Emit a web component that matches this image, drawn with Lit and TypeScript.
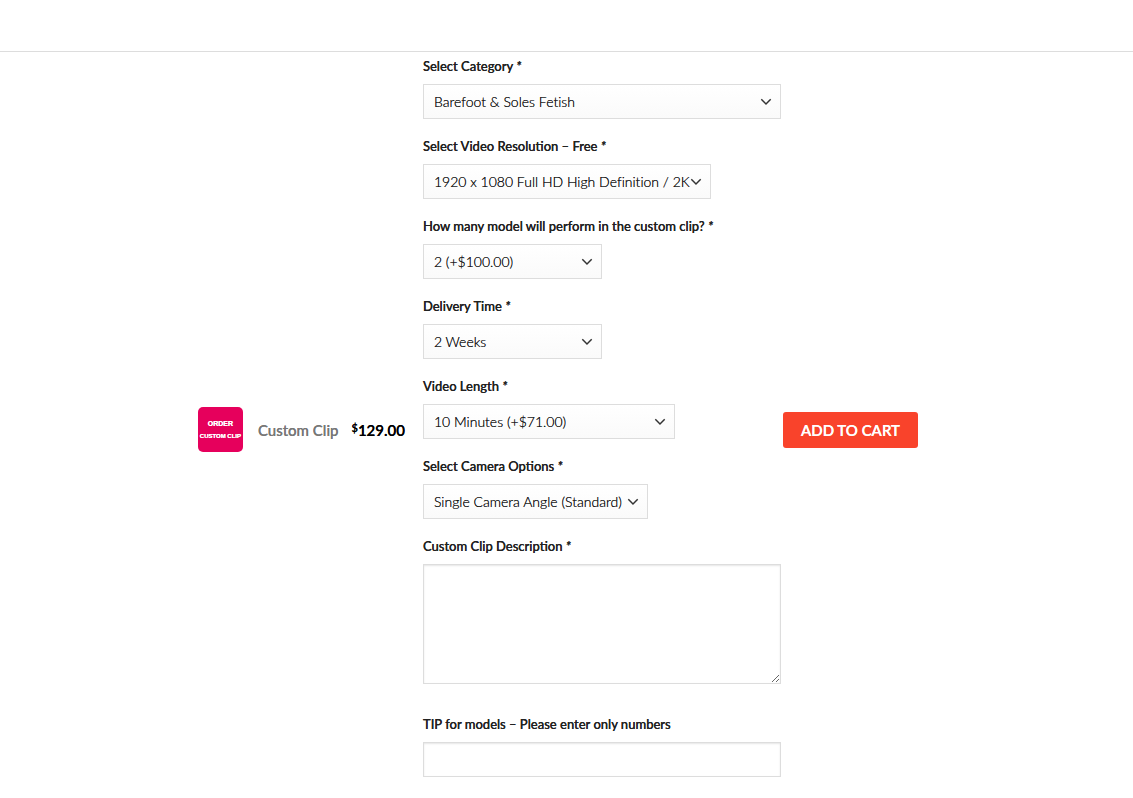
import { LitElement, html, css } from "lit";
import { customElement } from "lit/decorators.js";

interface Choice {
  id: string;
  label: string;
  value: string;
  size: string;
}

const choices: Choice[] = [
  { id: "category", label: "Select Category", value: "Barefoot & Soles Fetish", size: "full" },
  { id: "resolution", label: "Select Video Resolution – Free", value: "1920 x 1080 Full HD High Definition / 2K", size: "large" },
  { id: "models", label: "How many model will perform in the custom clip?", value: "2 (+$100.00)", size: "small" },
  { id: "delivery", label: "Delivery Time", value: "2 Weeks", size: "small" },
  { id: "length", label: "Video Length", value: "10 Minutes (+$71.00)", size: "medium" },
  { id: "camera", label: "Select Camera Options", value: "Single Camera Angle (Standard)", size: "compact" },
];

@customElement("app-root")
export class AppRoot extends LitElement {
  static styles = css`
    :host {
      display: block;
      font-family: Lato, sans-serif;
      color: #222;
      background: #fff;
    }
    * {
      box-sizing: border-box;
    }
    .top {
      height: 52px;
      border-bottom: 1px solid #ddd;
    }
    .cart {
      display: flex;
      justify-content: center;
      align-items: center;
      padding: 4px 17px 0 0;
    }
    .product {
      display: flex;
      align-items: center;
      padding-top: 26px;
      white-space: nowrap;
      font-size: 15px;
      line-height: 24px;
      font-weight: 500;
      text-shadow: 0 0 0 currentColor;
    }
    .thumb {
      width: 45px;
      height: 45px;
      margin-right: 15px;
      border-radius: 5px;
      overflow: hidden;
      background: #e6005c;
      color: #fff;
      display: flex;
      flex-direction: column;
      align-items: center;
      justify-content: center;
      font: 700 6px/13px "Liberation Sans Narrow", "Liberation Sans", sans-serif;
    }
    .thumb-top {
      font-size: 7px;
    }
    .title {
      color: #777;
      margin-right: 13px;
    }
    .price {
      color: #000;
      margin-right: 18px;
      display: flex;
      font-weight: 600;
    }
    .currency {
      font-size: 11px;
      line-height: 20px;
    }
    .form {
      flex: 0 1 358px;
      display: flex;
      flex-direction: column;
      gap: 17px;
    }
    .field {
      display: flex;
      flex-direction: column;
      align-items: flex-start;
      gap: 8px;
    }
    .label {
      font-size: 13px;
      line-height: 20px;
      font-weight: 500;
      text-shadow: 0 0 0 currentColor;
    }
    .required {
      font-style: italic;
      font-weight: 700;
      text-decoration: none;
    }
    .control {
      display: block;
      width: 100%;
      max-width: 100%;
      height: 35px;
      margin: 0;
      padding: 0 11px;
      border: 1px solid #ddd;
      border-radius: 0;
      background-color: #fff;
      color: #333;
      font: 400 14px/20px Lato, sans-serif;
      box-shadow: inset 0 1px 2px rgba(0, 0, 0, 0.1);
    }
    .select {
      appearance: none;
      padding: 0 8px 0 10px;
      box-shadow: none;
      font-weight: 300;
      color: #111;
      text-shadow: 0 0 0 #333;
      font-variant-ligatures: no-common-ligatures;
      background-color: #fff;
      background-image: url("data:image/svg+xml,%3Csvg xmlns='http://www.w3.org/2000/svg' width='12' height='8' viewBox='0 0 12 8' fill='none' stroke='%23333' stroke-width='1.5'%3E%3Cpath d='M1.3 1.3 6 6l4.7-4.7'/%3E%3C/svg%3E"),
        linear-gradient(#fff, #fafafa);
      background-repeat: no-repeat;
      background-position: right 8px center, 0 0;
      background-size: 12px 8px, 100% 100%;
    }
    .large {
      width: 288px;
    }
    .medium {
      width: 252px;
    }
    .compact {
      width: 225px;
    }
    .small {
      width: 179px;
    }
    .area {
      height: 120px;
      padding-top: 8px;
      margin-bottom: 13px;
      resize: vertical;
    }
    .add {
      margin: 26px 0 0 2px;
      height: 36px;
      padding: 0 18px;
      border: 0;
      border-radius: 3px;
      background: #f9432b;
      color: #fff;
      font: 600 15px/36px Lato, sans-serif;
      text-shadow: 0 0 0 currentColor;
      white-space: nowrap;
    }
  `;

  private renderChoice(c: Choice) {
    return html`
      <div class="field">
        <label class="label" for=${c.id}>${c.label} <abbr class="required">*</abbr></label>
        <select class="control select ${c.size}" id=${c.id} required>
          <option>${c.value}</option>
        </select>
      </div>
    `;
  }

  render() {
    return html`
      <header class="top"></header>
      <main class="cart">
        <div class="product">
          <div class="thumb"><span class="thumb-top">ORDER</span><span>CUSTOM CLIP</span></div>
          <span class="title">Custom Clip</span>
          <span class="price"><span class="currency">$</span>129.00</span>
        </div>
        <div class="form">
          ${choices.map((c) => this.renderChoice(c))}
          <div class="field">
            <label class="label" for="description">Custom Clip Description <abbr class="required">*</abbr></label>
            <textarea class="control area" id="description" required></textarea>
          </div>
          <div class="field">
            <label class="label" for="tip">TIP for models – Please enter only numbers</label>
            <input class="control" id="tip" type="text" inputmode="numeric" />
          </div>
        </div>
        <button class="add" type="button">ADD TO CART</button>
      </main>
    `;
  }
}
